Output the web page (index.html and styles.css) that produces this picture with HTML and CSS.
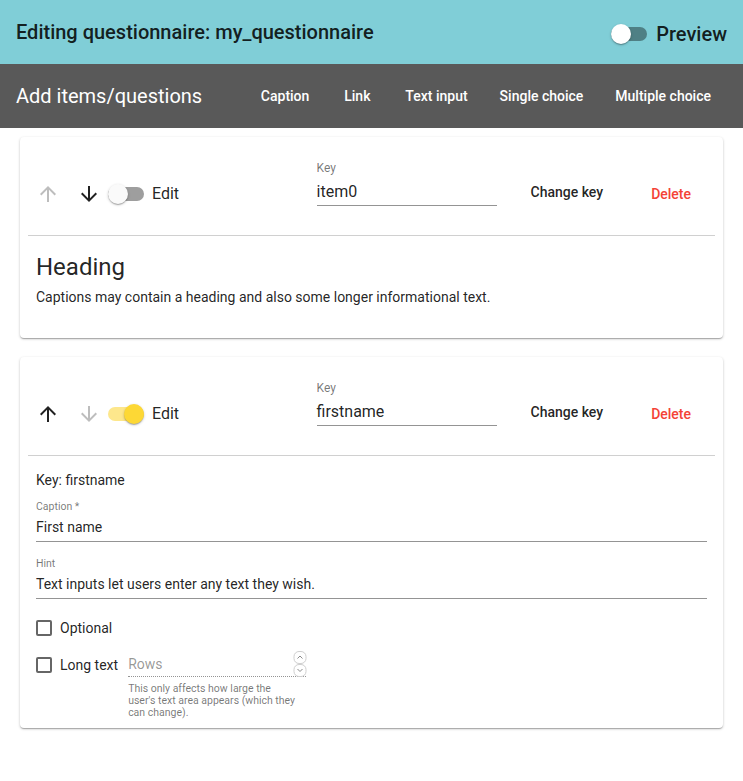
FILE: index.html
```html
<!DOCTYPE html>
<html lang="en">
<head>
<meta charset="utf-8">
<title>Editing questionnaire</title>
<link rel="stylesheet" href="styles.css">
</head>
<body>
<header class="appbar">
  <h1 class="title">Editing questionnaire: my_questionnaire</h1>
  <div class="preview">
    <span class="switch switch-header"><span class="track"></span><span class="thumb"></span></span>
    <span class="preview-text">Preview</span>
  </div>
</header>
<nav class="toolbar">
  <h2 class="toolbar-title">Add items/questions</h2>
  <div class="toolbar-actions">
    <span class="tb-btn">Caption</span>
    <span class="tb-btn">Link</span>
    <span class="tb-btn">Text input</span>
    <span class="tb-btn">Single choice</span>
    <span class="tb-btn">Multiple choice</span>
  </div>
</nav>
<main class="list">
  <section class="card">
    <div class="card-head">
      <svg class="arrow disabled" viewBox="0 0 24 24"><path d="M4 12l1.41 1.41L11 7.83V20h2V7.83l5.58 5.59L20 12l-8-8-8 8z"/></svg>
      <svg class="arrow down" viewBox="0 0 24 24"><path d="M20 12l-1.41-1.41L13 16.17V4h-2v12.17l-5.58-5.59L4 12l8 8 8-8z"/></svg>
      <span class="switch switch-off"><span class="track"></span><span class="thumb"></span></span>
      <span class="edit-label">Edit</span>
      <span class="spacer"></span>
      <div class="key-field">
        <div class="key-label">Key</div>
        <div class="key-input">item0</div>
      </div>
      <span class="btn btn-change">Change key</span>
      <span class="btn btn-delete">Delete</span>
    </div>
    <div class="divider"></div>
    <div class="caption-body">
      <h3 class="heading">Heading</h3>
      <p class="caption-text">Captions may contain a heading and also some longer informational text.</p>
    </div>
  </section>
  <section class="card">
    <div class="card-head">
      <svg class="arrow" viewBox="0 0 24 24"><path d="M4 12l1.41 1.41L11 7.83V20h2V7.83l5.58 5.59L20 12l-8-8-8 8z"/></svg>
      <svg class="arrow down disabled" viewBox="0 0 24 24"><path d="M20 12l-1.41-1.41L13 16.17V4h-2v12.17l-5.58-5.59L4 12l8 8 8-8z"/></svg>
      <span class="switch switch-on"><span class="track"></span><span class="thumb"></span></span>
      <span class="edit-label">Edit</span>
      <span class="spacer"></span>
      <div class="key-field">
        <div class="key-label">Key</div>
        <div class="key-input">firstname</div>
      </div>
      <span class="btn btn-change">Change key</span>
      <span class="btn btn-delete">Delete</span>
    </div>
    <div class="divider"></div>
    <div class="edit-body">
      <div class="key-line">Key: firstname</div>
      <div class="field">
        <div class="f-label">Caption *</div>
        <div class="f-input">First name</div>
      </div>
      <div class="field field-hint">
        <div class="f-label">Hint</div>
        <div class="f-input">Text inputs let users enter any text they wish.</div>
      </div>
      <div class="check-row">
        <span class="checkbox"></span>
        <span class="check-label">Optional</span>
      </div>
      <div class="check-row long-row">
        <span class="checkbox"></span>
        <span class="check-label">Long text</span>
        <div class="rows-field">
          <div class="rows-input">
            <span class="rows-placeholder">Rows</span>
            <svg class="spin" viewBox="0 0 14 26" width="14" height="26">
              <rect x="1" y="0.5" width="12" height="12" rx="5" fill="#fff" stroke="#cfcfcf"/>
              <rect x="1" y="13.5" width="12" height="12" rx="5" fill="#fff" stroke="#cfcfcf"/>
              <path d="M4.5 7.5L7 5l2.5 2.5" fill="none" stroke="#8a8a8a" stroke-width="1"/>
              <path d="M4.5 18l2.5 2.5L9.5 18" fill="none" stroke="#8a8a8a" stroke-width="1"/>
            </svg>
          </div>
          <div class="rows-helper">This only affects how large the user's text area appears (which they can change).</div>
        </div>
      </div>
    </div>
  </section>
</main>
</body>
</html>
```
FILE: styles.css
```css
* { box-sizing: border-box; }
html, body {
  margin: 0;
  padding: 0;
  background: #ffffff;
  font-family: Roboto, "Liberation Sans", Arial, sans-serif;
  color: rgba(0, 0, 0, 0.87);
}

.appbar {
  height: 64px;
  background: #80ced7;
  display: flex;
  align-items: center;
  justify-content: space-between;
  padding: 0 16px;
}
.title {
  margin: 0;
  font-size: 20px;
  font-weight: 500;
  line-height: 24px;
  color: rgba(0, 0, 0, 0.87);
}
.preview {
  display: flex;
  align-items: center;
  margin-top: 4px;
}
.preview-text {
  margin-left: 9px;
  font-size: 20px;
  font-weight: 500;
  line-height: 24px;
}

.switch {
  position: relative;
  display: block;
  width: 36px;
  height: 20px;
  flex: none;
}
.switch .track {
  position: absolute;
  left: 0;
  top: 3px;
  width: 36px;
  height: 14px;
  border-radius: 7px;
  background: #9e9e9e;
}
.switch .thumb {
  position: absolute;
  top: 0;
  left: 0;
  width: 20px;
  height: 20px;
  border-radius: 50%;
  background: #fafafa;
  box-shadow: 0 1px 3px rgba(0,0,0,0.2), 0 1px 1px rgba(0,0,0,0.14), 0 2px 1px -1px rgba(0,0,0,0.12);
}
.switch-header .track { background: #4f8085; }
.switch-header .thumb { background: #ffffff; }
.switch-on .track { background: #fde78c; }
.switch-on .thumb { left: 16px; background: #fdd835; }

.toolbar {
  height: 64px;
  background: #595959;
  display: flex;
  align-items: center;
  padding: 0 16px;
  color: #ffffff;
}
.toolbar-title {
  margin: 0;
  font-size: 20px;
  font-weight: 400;
  line-height: 24px;
}
.toolbar-actions {
  margin-left: auto;
  display: flex;
  align-items: center;
}
.tb-btn {
  min-width: 64px;
  height: 36px;
  padding: 0 16px;
  display: flex;
  align-items: center;
  justify-content: center;
  font-size: 14px;
  font-weight: 500;
  color: #ffffff;
}

.list {
  padding: 9px 20px 20px;
  display: flex;
  flex-direction: column;
  gap: 19px;
}
.card {
  background: #ffffff;
  border-radius: 4px;
  padding: 0 16px;
  box-shadow: 0 1px 3px rgba(0,0,0,0.2), 0 1px 1px rgba(0,0,0,0.14), 0 2px 1px -1px rgba(0,0,0,0.12);
}
.card-head {
  height: 98px;
  padding-top: 16px;
  display: flex;
  align-items: center;
}
.arrow {
  width: 24px;
  height: 24px;
  display: block;
  fill: rgba(0, 0, 0, 0.87);
  flex: none;
}
.arrow.disabled { fill: rgba(0, 0, 0, 0.26); }
.arrow.down { margin-left: 17px; }
.card-head .switch { margin-left: 7px; }
.edit-label {
  margin-left: 8px;
  font-size: 16px;
  line-height: 20px;
}
.spacer { flex: 1; }
.key-field {
  width: 180px;
  margin-bottom: 21px;
}
.key-label {
  font-size: 12px;
  line-height: 14px;
  color: rgba(0, 0, 0, 0.54);
}
.key-input {
  font-size: 16px;
  line-height: 19px;
  padding: 7px 0 4px;
  border-bottom: 1px solid rgba(0, 0, 0, 0.42);
}
.btn {
  height: 36px;
  min-width: 64px;
  padding: 0 16px;
  display: flex;
  align-items: center;
  justify-content: center;
  font-size: 14px;
  font-weight: 500;
}
.btn-change {
  margin-left: 18px;
  margin-bottom: 4px;
  color: rgba(0, 0, 0, 0.87);
}
.btn-delete {
  margin-left: 16px;
  color: #f44336;
}
.divider {
  height: 1px;
  margin: 0 -8px;
  background: #d0d0d0;
}

.caption-body {
  padding: 15px 0 31px;
}
.heading {
  margin: 0 0 4px;
  font-size: 24px;
  font-weight: 400;
  line-height: 32px;
}
.caption-text {
  margin: 0;
  font-size: 14px;
  line-height: 20px;
}

.edit-body {
  padding: 14px 0 9px;
}
.key-line {
  font-size: 14px;
  line-height: 20px;
}
.field { margin-top: 11px; }
.field-hint { margin-top: 16px; }
.f-label {
  font-size: 10.5px;
  line-height: 12px;
  color: rgba(0, 0, 0, 0.54);
}
.f-input {
  font-size: 14px;
  line-height: 17px;
  padding: 6px 0 5px;
  border-bottom: 1px solid rgba(0, 0, 0, 0.42);
}
.check-row {
  display: flex;
  align-items: center;
  margin-top: 19px;
  font-size: 14px;
  line-height: 20px;
}
.long-row {
  align-items: flex-start;
  margin-top: 17px;
}
.checkbox {
  width: 16px;
  height: 16px;
  margin: 2px 0;
  border: 2px solid #666666;
  border-radius: 2px;
  flex: none;
}
.check-label { margin-left: 8px; }
.rows-field {
  width: 178px;
  margin-left: 10px;
}
.rows-input {
  height: 22px;
  display: flex;
  align-items: flex-end;
  border-bottom: 1px dotted rgba(0, 0, 0, 0.42);
}
.rows-placeholder {
  flex: 1;
  align-self: flex-start;
  font-size: 14px;
  line-height: 19px;
  color: rgba(0, 0, 0, 0.42);
}
.spin {
  display: block;
  margin-right: -1px;
  margin-bottom: -1px;
}
.rows-helper {
  width: 170px;
  margin-top: 6px;
  font-size: 10.5px;
  line-height: 12px;
  color: rgba(0, 0, 0, 0.54);
}
```
